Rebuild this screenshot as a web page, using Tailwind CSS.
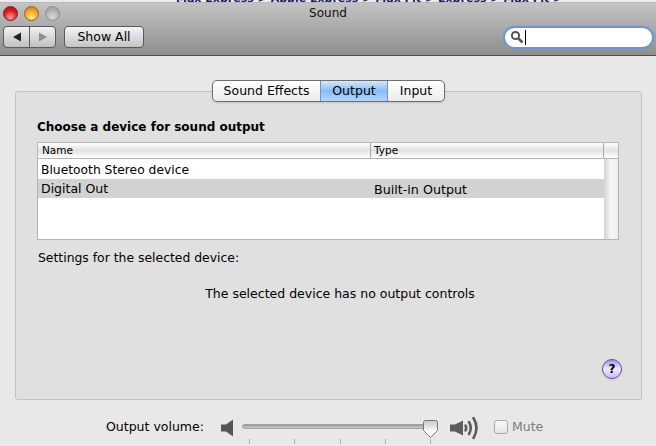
<!DOCTYPE html>
<html lang="en">
<head>
    <meta charset="UTF-8">
    <title>Sound</title>
    <script src="https://cdn.jsdelivr.net/npm/@tailwindcss/browser@4"></script>
</head>
<body class="w-[656px] h-[446px] overflow-hidden bg-[#e8e8e8] font-['DejaVu_Sans',sans-serif] text-[12.5px] text-black">
    <!-- strip of the window behind -->
    <div class="h-[3px] bg-[#ececec] border-b border-[#b8b8b8] overflow-hidden pl-[176px]">
        <div class="-mt-[7px] text-[11px] leading-[12px] whitespace-nowrap font-bold text-[#1c2060]">Max Express &gt; Apple Express &gt; Max Fit &gt; Express &gt; Max Fit &gt;</div>
    </div>

    <!-- title bar + toolbar -->
    <div class="h-[53px] bg-gradient-to-b from-[#c4c4c4] to-[#8e8e8e] border-b border-[#4f4f4f] flex flex-col">
        <div class="h-[22px] flex items-center pl-[3px]">
            <div class="flex gap-[6px] -mt-[2px]">
                <span class="w-[15px] h-[15px] rounded-full border border-[#7d2020] bg-[radial-gradient(circle_at_50%_80%,#ff9c9c,#dc1a20_55%,#a01218)]"></span>
                <span class="w-[15px] h-[15px] rounded-full border border-[#94641a] bg-[radial-gradient(circle_at_50%_80%,#ffe98a,#f0a020_60%,#b87414)]"></span>
                <span class="w-[15px] h-[15px] rounded-full border border-[#8c8c8c] bg-[radial-gradient(circle_at_50%_80%,#d8d8d8,#a8a8a8_70%)]"></span>
            </div>
            <div class="flex-1 text-center text-[12px] text-[#111] pr-[60px] -mt-[3px]">Sound</div>
        </div>
        <div class="flex items-center pl-[3px] pr-[2px] h-[24px]">
            <div class="w-[53px] h-[22px] rounded-[4px] border border-[#5a5a5a] bg-gradient-to-b from-[#f2f2f2] to-[#c0c0c0] flex">
                <div class="flex-1 flex items-center justify-center border-r border-[#5a5a5a]">
                    <svg width="10" height="10" viewBox="0 0 10 10"><path d="M1 5 L9 0.5 V9.5 Z" fill="#222"/></svg>
                </div>
                <div class="flex-1 flex items-center justify-center">
                    <svg width="10" height="10" viewBox="0 0 10 10"><path d="M9 5 L1 0.5 V9.5 Z" fill="#8e8e8e"/></svg>
                </div>
            </div>
            <button class="ml-[8px] w-[80px] h-[22px] rounded-[4px] border border-[#5a5a5a] bg-gradient-to-b from-[#f4f4f4] to-[#c4c4c4] text-[12.5px] leading-none">Show All</button>
            <div class="ml-auto w-[151px] h-[23px] rounded-full bg-white border-2 border-[#6f97c6] shadow-[0_0_2px_#7fa5d5] flex items-center pl-[5px]">
                <svg width="14" height="14" viewBox="0 0 14 14" fill="none" stroke="#555" stroke-width="2"><circle cx="5.5" cy="5.5" r="3.6"/><path d="M8.3 8.3 L12.5 12.5" stroke-width="2.6"/></svg>
                <span class="w-px h-[15px] bg-black ml-[1px]"></span>
            </div>
        </div>
    </div>

    <!-- tabbed panel -->
    <div class="mx-[15px] mt-[35px] w-[627px] h-[309px] bg-[#e0e0e0] border border-[#c2c2c2] rounded-[3px] flex flex-col">
        <div class="flex justify-center -mt-[12px]">
            <div class="flex h-[22px] rounded-[5px] border border-[#6e6e6e] bg-gradient-to-b from-white to-[#ececec] overflow-hidden shadow-sm">
                <div class="w-[107px] flex items-center justify-center leading-none">Sound Effects</div>
                <div class="w-[68px] flex items-center justify-center leading-none border-x border-[#6d94c4] bg-gradient-to-b from-[#d5e6fb] via-[#86bdf7] to-[#b4d6fb]">Output</div>
                <div class="w-[56px] flex items-center justify-center leading-none">Input</div>
            </div>
        </div>

        <div class="pl-[21px] pr-[21px] flex flex-col flex-1">
            <h2 class="mt-[17px] font-bold text-[12px] leading-[16px]">Choose a device for sound output</h2>

            <!-- device table -->
            <div class="mt-[7px] w-[582px] h-[98px] border border-[#b4b4b4] bg-white flex flex-col">
                <div class="h-[16px] border-b border-[#b4b4b4] flex bg-gradient-to-b from-white via-[#e2e2e2] to-white text-[10.5px] leading-[15px]">
                    <div class="w-[333px] pl-[4px] border-r border-[#a8a8a8]">Name</div>
                    <div class="w-[233px] pl-[3px] border-r border-[#a8a8a8]">Type</div>
                    <div class="flex-1"></div>
                </div>
                <div class="flex flex-1">
                    <div class="w-[566px]">
                        <div class="h-[20px] flex items-center pl-[3px] pt-[2px] text-[12.3px]">Bluetooth Stereo device</div>
                        <div class="h-[19px] flex items-center bg-[#d2d2d2] pt-[2px]">
                            <div class="w-[333px] pl-[3px]">Digital Out</div>
                            <div class="pl-[3px] text-[12.7px]">Built-in Output</div>
                        </div>
                    </div>
                    <div class="flex-1 bg-gradient-to-r from-[#d4d4d4] via-[#f6f6f6] to-[#eeeeee]"></div>
                </div>
            </div>

            <p class="mt-[10px] pl-[1px] leading-[16px] text-[12.4px]">Settings for the selected device:</p>
            <p class="mt-[20px] pl-[23px] leading-[16px] text-center">The selected device has no output controls</p>

            <div class="mt-[57px] flex justify-end -mr-[2px]">
                <div class="w-[20px] h-[20px] rounded-full border border-[#5e5590] bg-gradient-to-b from-[#a78fe6] via-[#efe9ff] to-[#c9b8f5] flex items-center justify-center text-[12px] font-bold leading-none shadow-sm">?</div>
            </div>
        </div>
    </div>

    <!-- volume row -->
    <div class="mt-[16px] flex items-start pl-[106px] h-[30px]">
        <span class="w-[98px] leading-[22px]">Output volume:</span>
        <svg class="mt-[3px] ml-[17px]" width="13" height="18" viewBox="0 0 13 18"><path d="M0 5.5 H5 L12 0.5 V17.5 L5 12.5 H0 Z" fill="#555"/></svg>
        <div class="ml-[8px] w-[196px] relative">
            <div class="mt-[8px] w-[188px] h-[5px] rounded-full border border-[#a0a0a0] bg-gradient-to-b from-[#999999] to-[#cfcfcf]"></div>
            <div class="flex justify-between mt-[10px] px-[7px]">
                <span class="w-px h-[5px] bg-[#b0b0b0]"></span>
                <span class="w-px h-[5px] bg-[#b0b0b0]"></span>
                <span class="w-px h-[5px] bg-[#b0b0b0]"></span>
                <span class="w-px h-[5px] bg-[#b0b0b0]"></span>
                <span class="w-px h-[5px] bg-[#b0b0b0]"></span>
            </div>
            <svg class="absolute left-[181px] top-[4px]" width="15" height="18" viewBox="0 0 15 18">
                <defs><linearGradient id="thumb" x1="0" y1="0" x2="0" y2="1"><stop offset="0" stop-color="#c8c8c8"/><stop offset=".6" stop-color="#f8f8f8"/><stop offset="1" stop-color="#ffffff"/></linearGradient></defs>
                <path d="M2.5 .5 H12.5 Q14.5 .5 14.5 2.5 V10.5 L7.5 17.5 L.5 10.5 V2.5 Q.5 .5 2.5 .5 Z" fill="url(#thumb)" stroke="#777"/>
            </svg>
        </div>
        <svg class="ml-[12px]" width="30" height="24" viewBox="0 0 30 24" fill="none" stroke="#5c5c5c" stroke-width="2.6" stroke-linecap="round"><path d="M0 8.5 H5 L13 4.5 V19.5 L5 15.5 H0 Z" fill="#5c5c5c" stroke="none"/><path d="M15.5 9.5 Q17 12 15.5 14.5"/><path d="M19 6 Q22.5 12 19 18"/><path d="M23.5 2 Q29.5 12 23.5 22"/></svg>
        <span class="ml-[14px] mt-[4px] w-[14px] h-[14px] rounded-[3px] border border-[#a8a8a8] bg-gradient-to-b from-[#fafafa] to-[#e4e4e4]"></span>
        <span class="ml-[4px] leading-[22px] text-[#7c7c7c]">Mute</span>
    </div>
</body>
</html>
